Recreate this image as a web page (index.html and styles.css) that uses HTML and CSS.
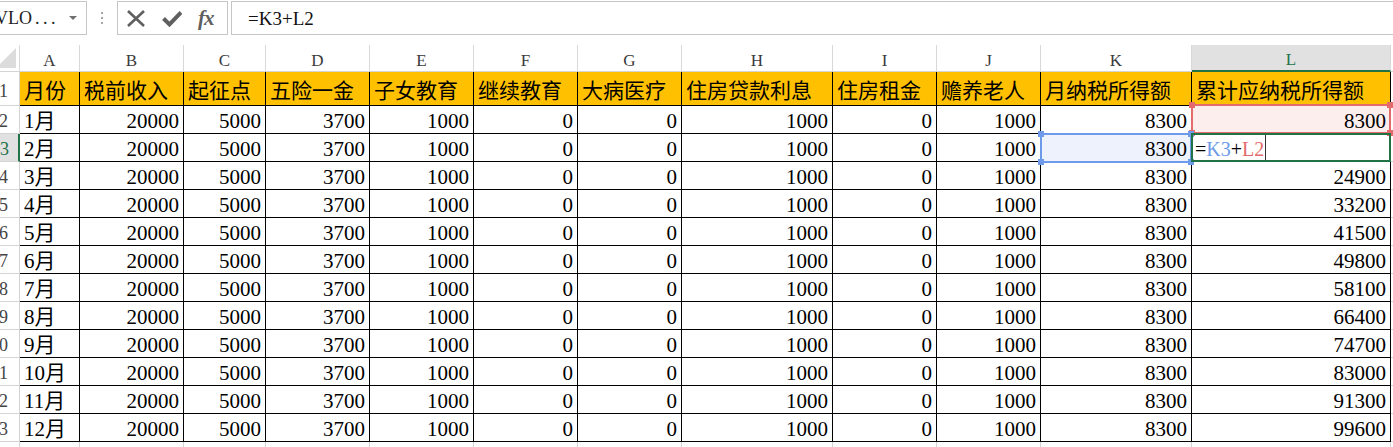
FILE: index.html
```html
<!DOCTYPE html>
<html lang="zh-CN">
<head>
<meta charset="utf-8">
<title>Sheet</title>
<link rel="stylesheet" href="styles.css">
</head>
<body>
<div class="toolbar">
  <div class="namebox"><span class="nb-text">VLO<span class="dots">...</span></span><span class="nb-arrow"></span></div>
  <div class="grip"><svg width="4" height="12" viewBox="0 0 4 12"><rect x="1" y="0" width="2" height="2" fill="#a6a6a6"/><rect x="1" y="5" width="2" height="2" fill="#a6a6a6"/><rect x="1" y="10" width="2" height="2" fill="#a6a6a6"/></svg></div>
  <div class="fxbox">
    <svg class="ico-x" width="20" height="20" viewBox="0 0 20 20"><path d="M2 2 L18 17 M18 2 L2 17" stroke="#5f5f5f" stroke-width="2.6" fill="none"/></svg>
    <svg class="ico-check" width="20" height="20" viewBox="0 0 20 20"><path d="M1.5 9.5 L7.5 15.5 L19 3.5" stroke="#5f5f5f" stroke-width="4" fill="none"/></svg>
    <span class="fx">fx</span>
  </div>
  <div class="formula">=K3+L2</div>
</div>
<div class="sheet-wrap">
<table class="sheet">
  <colgroup>
    <col class="c-rh"><col class="c-a"><col class="c-b"><col class="c-c"><col class="c-w"><col class="c-w"><col class="c-w"><col class="c-w"><col class="c-h"><col class="c-w"><col class="c-w"><col class="c-k"><col class="c-l"><col class="c-m">
  </colgroup>
  <thead>
    <tr class="colhead">
      <th class="corner"><svg width="20" height="26" viewBox="0 0 20 26"><polygon points="16,3 16,23 0,23 0,19" fill="#dcdcdc"/></svg></th>
      <th>A</th><th>B</th><th>C</th><th>D</th><th>E</th><th>F</th><th>G</th><th>H</th><th>I</th><th>J</th><th>K</th><th class="active">L</th><th class="m"></th>
    </tr>
  </thead>
  <tbody>
    <tr class="title">
      <th class="rh">1</th><td>月份</td><td>税前收入</td><td>起征点</td><td>五险一金</td><td>子女教育</td><td>继续教育</td><td>大病医疗</td><td>住房贷款利息</td><td>住房租金</td><td>赡养老人</td><td>月纳税所得额</td><td>累计应纳税所得额</td><td class="m"></td>
    </tr>
    <tr>
      <th class="rh">2</th><td class="t">1月</td><td>20000</td><td>5000</td><td>3700</td><td>1000</td><td>0</td><td>0</td><td>1000</td><td>0</td><td>1000</td><td>8300</td><td class="ref-red">8300<div class="sel red"><i class="h tl"></i><i class="h tr"></i><i class="h bl"></i><i class="h br"></i></div></td><td class="m"></td>
    </tr>
    <tr>
      <th class="rh cur">3</th><td class="t">2月</td><td>20000</td><td>5000</td><td>3700</td><td>1000</td><td>0</td><td>0</td><td>1000</td><td>0</td><td>1000</td><td class="ref-blue">8300<div class="sel blue"><i class="h tl"></i><i class="h tr"></i><i class="h bl"></i><i class="h br"></i></div></td><td class="t editing">=<span class="rk">K3</span>+<span class="rl">L2</span><span class="caret"></span><div class="sel green"></div></td><td class="m"></td>
    </tr>
    <tr><th class="rh">4</th><td class="t">3月</td><td>20000</td><td>5000</td><td>3700</td><td>1000</td><td>0</td><td>0</td><td>1000</td><td>0</td><td>1000</td><td>8300</td><td>24900</td><td class="m"></td></tr>
    <tr><th class="rh">5</th><td class="t">4月</td><td>20000</td><td>5000</td><td>3700</td><td>1000</td><td>0</td><td>0</td><td>1000</td><td>0</td><td>1000</td><td>8300</td><td>33200</td><td class="m"></td></tr>
    <tr><th class="rh">6</th><td class="t">5月</td><td>20000</td><td>5000</td><td>3700</td><td>1000</td><td>0</td><td>0</td><td>1000</td><td>0</td><td>1000</td><td>8300</td><td>41500</td><td class="m"></td></tr>
    <tr><th class="rh">7</th><td class="t">6月</td><td>20000</td><td>5000</td><td>3700</td><td>1000</td><td>0</td><td>0</td><td>1000</td><td>0</td><td>1000</td><td>8300</td><td>49800</td><td class="m"></td></tr>
    <tr><th class="rh">8</th><td class="t">7月</td><td>20000</td><td>5000</td><td>3700</td><td>1000</td><td>0</td><td>0</td><td>1000</td><td>0</td><td>1000</td><td>8300</td><td>58100</td><td class="m"></td></tr>
    <tr><th class="rh">9</th><td class="t">8月</td><td>20000</td><td>5000</td><td>3700</td><td>1000</td><td>0</td><td>0</td><td>1000</td><td>0</td><td>1000</td><td>8300</td><td>66400</td><td class="m"></td></tr>
    <tr><th class="rh">10</th><td class="t">9月</td><td>20000</td><td>5000</td><td>3700</td><td>1000</td><td>0</td><td>0</td><td>1000</td><td>0</td><td>1000</td><td>8300</td><td>74700</td><td class="m"></td></tr>
    <tr><th class="rh">11</th><td class="t">10月</td><td>20000</td><td>5000</td><td>3700</td><td>1000</td><td>0</td><td>0</td><td>1000</td><td>0</td><td>1000</td><td>8300</td><td>83000</td><td class="m"></td></tr>
    <tr><th class="rh">12</th><td class="t">11月</td><td>20000</td><td>5000</td><td>3700</td><td>1000</td><td>0</td><td>0</td><td>1000</td><td>0</td><td>1000</td><td>8300</td><td>91300</td><td class="m"></td></tr>
    <tr><th class="rh">13</th><td class="t">12月</td><td>20000</td><td>5000</td><td>3700</td><td>1000</td><td>0</td><td>0</td><td>1000</td><td>0</td><td>1000</td><td>8300</td><td>99600</td><td class="m"></td></tr>
    <tr class="empty"><th class="rh"></th><td></td><td></td><td></td><td></td><td></td><td></td><td></td><td></td><td></td><td></td><td></td><td></td><td class="m"></td></tr>
  </tbody>
</table>
</div>
</body>
</html>
```
FILE: styles.css
```css
html, body {
  margin: 0;
  padding: 0;
  height: 447px;
  overflow: hidden;
  background: #fff;
}

.toolbar {
  display: flex;
  align-items: flex-start;
  height: 45px;
  font-family: "Liberation Serif", "Noto Sans CJK SC", serif;
}

.namebox {
  box-sizing: border-box;
  position: relative;
  flex: none;
  margin: 1px 0 0 -9px;
  width: 96px;
  height: 34px;
  border: 1px solid #c6c6c6;
  overflow: hidden;
}

.nb-text {
  position: absolute;
  left: 3px;
  top: 5px;
  font-size: 18px;
  line-height: 22px;
  color: #222;
  white-space: nowrap;
}

.dots {
  letter-spacing: 3.5px;
  margin-left: 3px;
}

.nb-arrow {
  position: absolute;
  left: 77px;
  top: 14px;
  width: 0;
  height: 0;
  border-left: 4px solid transparent;
  border-right: 4px solid transparent;
  border-top: 4px solid #707070;
}

.grip {
  flex: none;
  margin: 12px 0 0 13px;
  width: 4px;
  height: 12px;
}

.grip svg {
  display: block;
}

.fxbox {
  box-sizing: border-box;
  flex: none;
  display: flex;
  align-items: center;
  margin: 1px 0 0 13px;
  width: 111px;
  height: 34px;
  border: 1px solid #c6c6c6;
}

.ico-x {
  margin-left: 8px;
  margin-top: 2px;
}

.ico-check {
  margin-left: 16px;
  margin-top: 1px;
}

.fx {
  margin-left: 16px;
  font-family: "Liberation Serif", serif;
  font-style: italic;
  font-weight: bold;
  font-size: 21px;
  color: #5f5f5f;
  letter-spacing: -1px;
}

.formula {
  box-sizing: border-box;
  flex: 1;
  margin: 1px -20px 0 3px;
  height: 34px;
  border: 1px solid #c6c6c6;
  padding: 4px 0 0 16px;
  font-size: 19px;
  line-height: 26px;
  color: #111;
  white-space: nowrap;
}

.sheet-wrap {
  width: 1393px;
  overflow: hidden;
}

.sheet {
  border-collapse: separate;
  border-spacing: 0;
  table-layout: fixed;
  width: 1491px;
}

.c-rh { width: 20px; }
.c-a { width: 60px; }
.c-b { width: 104px; }
.c-c { width: 82px; }
.c-w { width: 104px; }
.c-h { width: 151px; }
.c-k { width: 151px; }
.c-l { width: 199px; }
.c-m { width: 100px; }

.sheet th,
.sheet td {
  box-sizing: border-box;
  padding: 0;
  white-space: nowrap;
  overflow: hidden;
}

/* column header row */
.colhead th {
  height: 27px;
  border-right: 1px solid #d8d8d8;
  border-bottom: 1px solid #d4d4d4;
  font: normal 17px/20px "Liberation Serif", serif;
  color: #3a3a3a;
  text-align: center;
  vertical-align: bottom;
  background: #fff;
}

.colhead th.corner {
  vertical-align: top;
}

.colhead th.corner svg {
  display: block;
}

.colhead th.active {
  background: #e1e1e1;
  color: #217346;
  border-bottom: 2px solid #217346;
}

.colhead th.m {
  border-right: none;
}

/* row headers */
.sheet th.rh {
  direction: rtl;
  border-right: 1px solid #d4d4d4;
  border-bottom: 1px solid #d4d4d4;
  font: normal 18px/24px "Liberation Serif", serif;
  color: #444;
  text-align: right;
  padding-right: 12px;
  vertical-align: bottom;
  overflow: hidden;
  background: #fff;
}

.sheet th.rh.cur {
  background: #e1e1e1;
  color: #217346;
  border-right: 2px solid #217346;
  padding-right: 11px;
}

/* data cells */
.sheet td {
  height: 28px;
  border-right: 1px solid #000;
  border-bottom: 1px solid #000;
  padding: 0 4px;
  font-family: "Liberation Serif", "Noto Sans CJK SC", serif;
  font-size: 21px;
  line-height: 24px;
  color: #000;
  text-align: right;
  vertical-align: bottom;
}

.sheet td.t {
  text-align: left;
}

.sheet td.m {
  border-right: none;
  border-bottom: 1px solid #d4d4d4;
}

.title td {
  height: 34px;
  background: #ffc000;
  text-align: left;
  font-family: "Noto Sans CJK SC", sans-serif;
  font-size: 21px;
  line-height: 30px;
  vertical-align: middle;
}

.title td.m {
  background: #fff;
}

.sheet .title th.rh {
  line-height: 28px;
}

.empty td,
.sheet .empty th.rh {
  height: 12px;
  border-bottom: none;
  border-right: 1px solid #d4d4d4;
}

.sheet .empty td.m {
  border-right: none;
  border-bottom: none;
}

/* reference highlights */
.ref-red,
.ref-blue,
.editing {
  position: relative;
  overflow: visible !important;
}

.ref-red {
  background: #fdeeee;
}

.ref-blue {
  background: #eef2fc;
}

.sel {
  position: absolute;
  box-sizing: border-box;
  border: 2px solid;
  pointer-events: none;
}

.sel.red {
  border-color: #e36b6b;
  top: -2px;
  left: -1px;
  right: -1px;
  bottom: -1px;
  z-index: 2;
}

.sel.blue {
  border-color: #6d9be9;
  top: -1px;
  left: -1px;
  right: -1px;
  bottom: -2px;
  z-index: 2;
}

.sel.green {
  border-color: #217346;
  top: -1px;
  left: -1px;
  right: -1px;
  bottom: -1px;
  z-index: 3;
}

.h {
  position: absolute;
  width: 6px;
  height: 6px;
}

.red .h { background: #e36b6b; }
.blue .h { background: #6d9be9; }

.h.tl { top: -4px; left: -4px; }
.h.tr { top: -4px; right: -4px; }
.h.bl { bottom: -4px; left: -4px; }
.h.br { bottom: -4px; right: -4px; }

.sheet td.editing {
  padding-left: 3px;
  font-size: 20px;
}

.rk { color: #6d9be9; }
.rl { color: #e36b6b; }

.caret {
  position: absolute;
  top: 0;
  bottom: 0;
  width: 1px;
  margin-left: 1px;
  background: #333;
}
```
